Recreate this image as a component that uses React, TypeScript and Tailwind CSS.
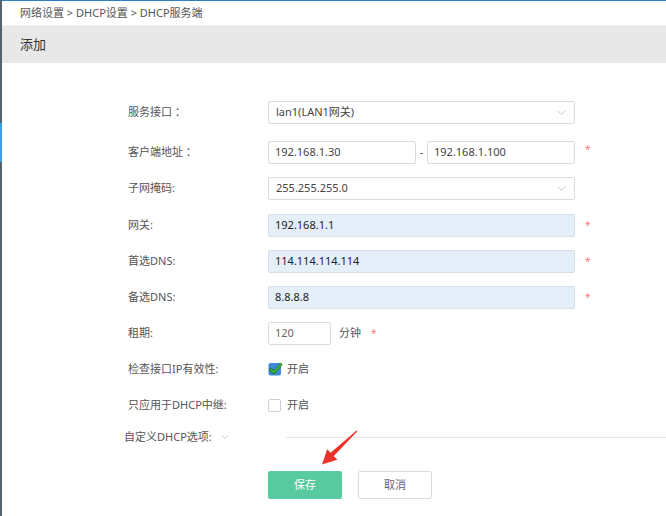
import React from 'react';
import { ChevronDown } from 'lucide-react';

const FONT = "font-['Noto_Sans','Noto_Sans_CJK_SC',sans-serif]";

const Star = () => <span className="ml-[10px] text-[10px] leading-none text-[#f07f7f]">*</span>;

const Row: React.FC<{ label: string; className?: string; children: React.ReactNode }> = ({ label, className = 'h-[36px]', children }) => (
  <div className={`flex items-center ${className}`}>
    <div className="w-[140px] text-[11px] text-[#555]">{label}</div>
    <div className="flex items-center">{children}</div>
  </div>
);

const Select: React.FC<{ value: string }> = ({ value }) => (
  <div className="flex items-center justify-between w-[307px] h-[23px] border border-[#dcdcdc] rounded-[2px] bg-white pl-[7px] pr-[5px] text-[11px] text-[#444]">
    <span>{value}</span>
    <ChevronDown size={15} strokeWidth={1} color="#a8a8a8" />
  </div>
);

const Input: React.FC<{ value: string; blue?: boolean; w?: string }> = ({ value, blue, w = 'w-[307px]' }) => (
  <div
    className={`flex items-center ${w} h-[23px] border rounded-[2px] pl-[6px] text-[11px] ${
      blue ? 'bg-[#e4effa] border-[#d6dfe8] text-[#222]' : 'bg-white border-[#dcdcdc] text-[#444]'
    }`}
  >
    {value}
  </div>
);

const Check: React.FC<{ checked?: boolean }> = ({ checked }) =>
  checked ? (
    <svg width="16" height="14" viewBox="0 0 16 14">
      <rect x="0.5" y="1" width="12.5" height="12.5" rx="2" fill="#3f88d8" />
      <path d="M2.8 7.4 L5.8 10.4 L12.8 2.6" fill="none" stroke="#1b6b1b" strokeWidth="3" strokeLinecap="round" strokeLinejoin="round" />
      <path d="M2.8 7.4 L5.8 10.4 L12.8 2.6" fill="none" stroke="#3cc13c" strokeWidth="1.6" strokeLinecap="round" strokeLinejoin="round" />
    </svg>
  ) : (
    <div className="w-[13px] h-[13px] border border-[#cfcfcf] rounded-[2px] bg-white mr-[3px]" />
  );

export default function App() {
  return (
    <div className={`relative w-[666px] h-[516px] overflow-hidden bg-white flex ${FONT}`}>
      {/* left sidebar edge */}
      <div className="w-[2px] flex flex-col bg-[#56626e]">
        <div className="h-[123px]" />
        <div className="h-[39px] bg-[#3b9fe2]" />
      </div>

      <div className="flex-1 flex flex-col">
        <div className="h-[1px] bg-[#2f7fc1]" />
        <div className="h-[24px] flex items-center pl-[18px] text-[11px] text-[#555]">
          网络设置 &gt; DHCP设置 &gt; DHCP服务端
        </div>
        <div className="h-[38px] bg-[#e8e8e8] border-t border-[#f0f0f0] flex items-center pl-[18px] text-[13px] text-[#333]">
          添加
        </div>

        <div className="pl-[126px] pt-[31px] flex flex-col">
          <Row label="服务接口 ：">
            <Select value="lan1(LAN1网关)" />
          </Row>
          <Row label="客户端地址 ：" className="h-[36px] mt-[4px]">
            <Input value="192.168.1.30" w="w-[148px]" />
            <span className="w-[11px] text-center text-[11px] text-[#555]">-</span>
            <Input value="192.168.1.100" w="w-[148px]" />
            <span className="ml-[10px] text-[10px] leading-none text-[#f07f7f] -mt-[6px]">*</span>
          </Row>
          <Row label="子网掩码:" className="h-[37px]">
            <Select value="255.255.255.0" />
          </Row>
          <Row label="网关:">
            <Input value="192.168.1.1" blue />
            <Star />
          </Row>
          <Row label="首选DNS:">
            <Input value="114.114.114.114" blue />
            <Star />
          </Row>
          <Row label="备选DNS:">
            <Input value="8.8.8.8" blue />
            <Star />
          </Row>
          <Row label="租期:">
            <div className="flex items-center w-[63px] h-[23px] border border-[#dcdcdc] rounded-[2px] pl-[6px] text-[11px] text-[#666]">120</div>
            <span className="ml-[8px] text-[11px] text-[#555]">分钟</span>
            <span className="ml-[10px] text-[10px] leading-none text-[#f07f7f]">*</span>
          </Row>
          <Row label="检查接口IP有效性:">
            <Check checked />
            <span className="ml-[3px] text-[11px] text-[#555]">开启</span>
          </Row>
          <Row label="只应用于DHCP中继:">
            <Check />
            <span className="ml-[3px] text-[11px] text-[#555]">开启</span>
          </Row>
          <div className="flex items-center h-[28px] -ml-[4px]">
            <div className="w-[162px] flex items-center text-[11px] text-[#555]">
              自定义DHCP选项:
              <ChevronDown size={12} strokeWidth={1.2} color="#a0a0a0" className="ml-[7px]" />
            </div>
            <div className="flex-1 h-[1px] bg-[#e6e6e6]" />
          </div>

          <div className="flex items-center gap-[16px] mt-[20px] pl-[140px]">
            <button className="w-[74px] h-[28px] rounded-[2px] bg-[#58ca9f] text-white text-[11px]">保存</button>
            <button className="w-[74px] h-[28px] rounded-[2px] border border-[#dcdcdc] bg-white text-[#666] text-[11px]">取消</button>
          </div>
        </div>
      </div>

      {/* annotation arrow */}
      <svg className="absolute inset-0 pointer-events-none" width="666" height="516">
        <polygon
          points="357.4,431.3 333.8,456 337.3,459.7 322,464.5 327.2,449.2 330.6,452.8 356.6,430.6"
          fill="#ea3329"
        />
      </svg>
    </div>
  );
}
